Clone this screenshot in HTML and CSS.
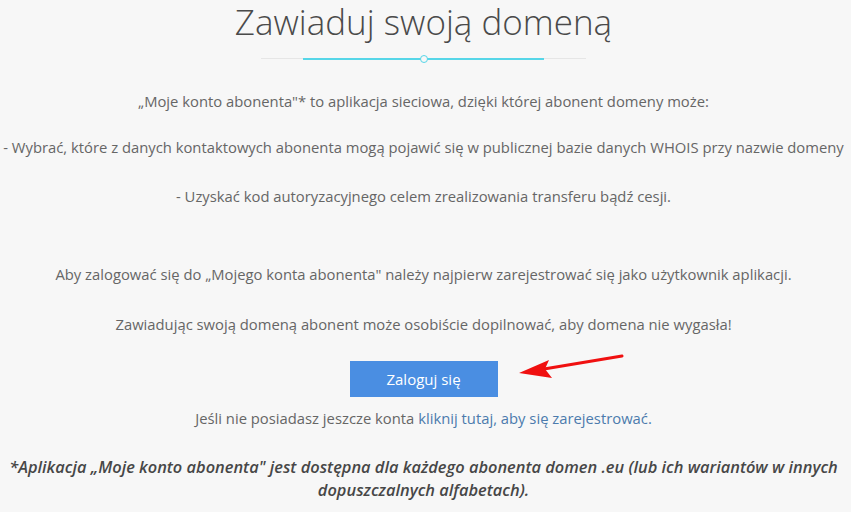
FILE: index.html
```html
<!DOCTYPE html>
<html>
<head>
<meta charset="utf-8"/>
<title>Zawiaduj swoją domeną</title>
<link rel="stylesheet" href="styles.css">
</head>
<body>

<div class="page">
<h1>Zawiaduj swoją domeną</h1>

<div class="divider">
<span class="divider-dot"></span>
</div>

<p class="line first">„Moje konto abonenta"* to aplikacja sieciowa, dzięki której abonent domeny może:</p>
<p class="line">- Wybrać, które z danych kontaktowych abonenta mogą pojawić się w publicznej bazie danych WHOIS przy nazwie domeny</p>
<p class="line third">- Uzyskać kod autoryzacyjnego celem zrealizowania transferu bądź cesji.</p>

<p class="line spaced">Aby zalogować się do „Mojego konta abonenta" należy najpierw zarejestrować się jako użytkownik aplikacji.</p>
<p class="line fifth">Zawiadując swoją domeną abonent może osobiście dopilnować, aby domena nie wygasła!</p>

<a class="btn" href="#">Zaloguj się</a>

<p class="register">Jeśli nie posiadasz jeszcze konta <a href="#">kliknij tutaj, aby się zarejestrować.</a></p>

<p class="note">*Aplikacja „Moje konto abonenta" jest dostępna dla każdego abonenta domen .eu (lub ich wariantów w innych dopuszczalnych alfabetach).</p>
</div>

<svg class="arrow" width="120" height="40" viewBox="0 0 120 40">
<line x1="34" y1="24" x2="112" y2="11" stroke="#f01010" stroke-width="3" stroke-linecap="round"/>
<polygon points="9,28 39,15 35,24 42,33" fill="#f01010"/>
</svg>

</body>
</html>
```

FILE: styles.css
```css
body {
   margin: 0;
   background-color: #f7f7f7;
   font-family: "Open Sans", "DejaVu Sans", sans-serif;
   color: #666666;
   font-size: 14.8px;
}

.page {
   display: flex;
   flex-direction: column;
   align-items: center;
   padding-right: 4px;
   text-align: center;
}

h1 {
   margin: 0;
   padding-top: 2px;
   font-size: 35px;
   font-weight: 300;
   line-height: 40px;
   color: #4a4a4a;
}

.divider {
   position: relative;
   margin-top: 12px;
   width: 325px;
   height: 9px;
   display: flex;
   justify-content: center;
   align-items: center;
   background: linear-gradient(#e6e6e6, #e6e6e6) center / 100% 1px no-repeat;
}

.divider::before {
   content: "";
   position: absolute;
   left: 42px;
   right: 42px;
   top: 4px;
   height: 2px;
   background-color: #56d6e8;
}

.divider-dot {
   position: relative;
   width: 6px;
   height: 6px;
   border: 1.5px solid #56d6e8;
   border-radius: 50%;
   background-color: #f7f7f7;
}

.line {
   margin: 26px 0 0;
   line-height: 20px;
   white-space: nowrap;
}

.line.first {
   margin-top: 28px;
}

.line.third {
   margin-top: 29px;
}

.line.spaced {
   margin-top: 58px;
}

.line.fifth {
   margin-top: 30px;
}

.btn {
   margin-top: 27px;
   width: 148px;
   height: 36px;
   line-height: 36px;
   background-color: #4a8ee2;
   color: #ffffff;
   font-size: 15px;
   text-decoration: none;
}

.register {
   margin: 11px 0 0;
   line-height: 20px;
}

.register a {
   color: #4c7bad;
   text-decoration: none;
}

.note {
   margin: 27px 0 0;
   width: 845px;
   font-size: 16.4px;
   font-style: italic;
   font-weight: 600;
   line-height: 23px;
   color: #474747;
}

.arrow {
   position: absolute;
   left: 510px;
   top: 345px;
}
```
